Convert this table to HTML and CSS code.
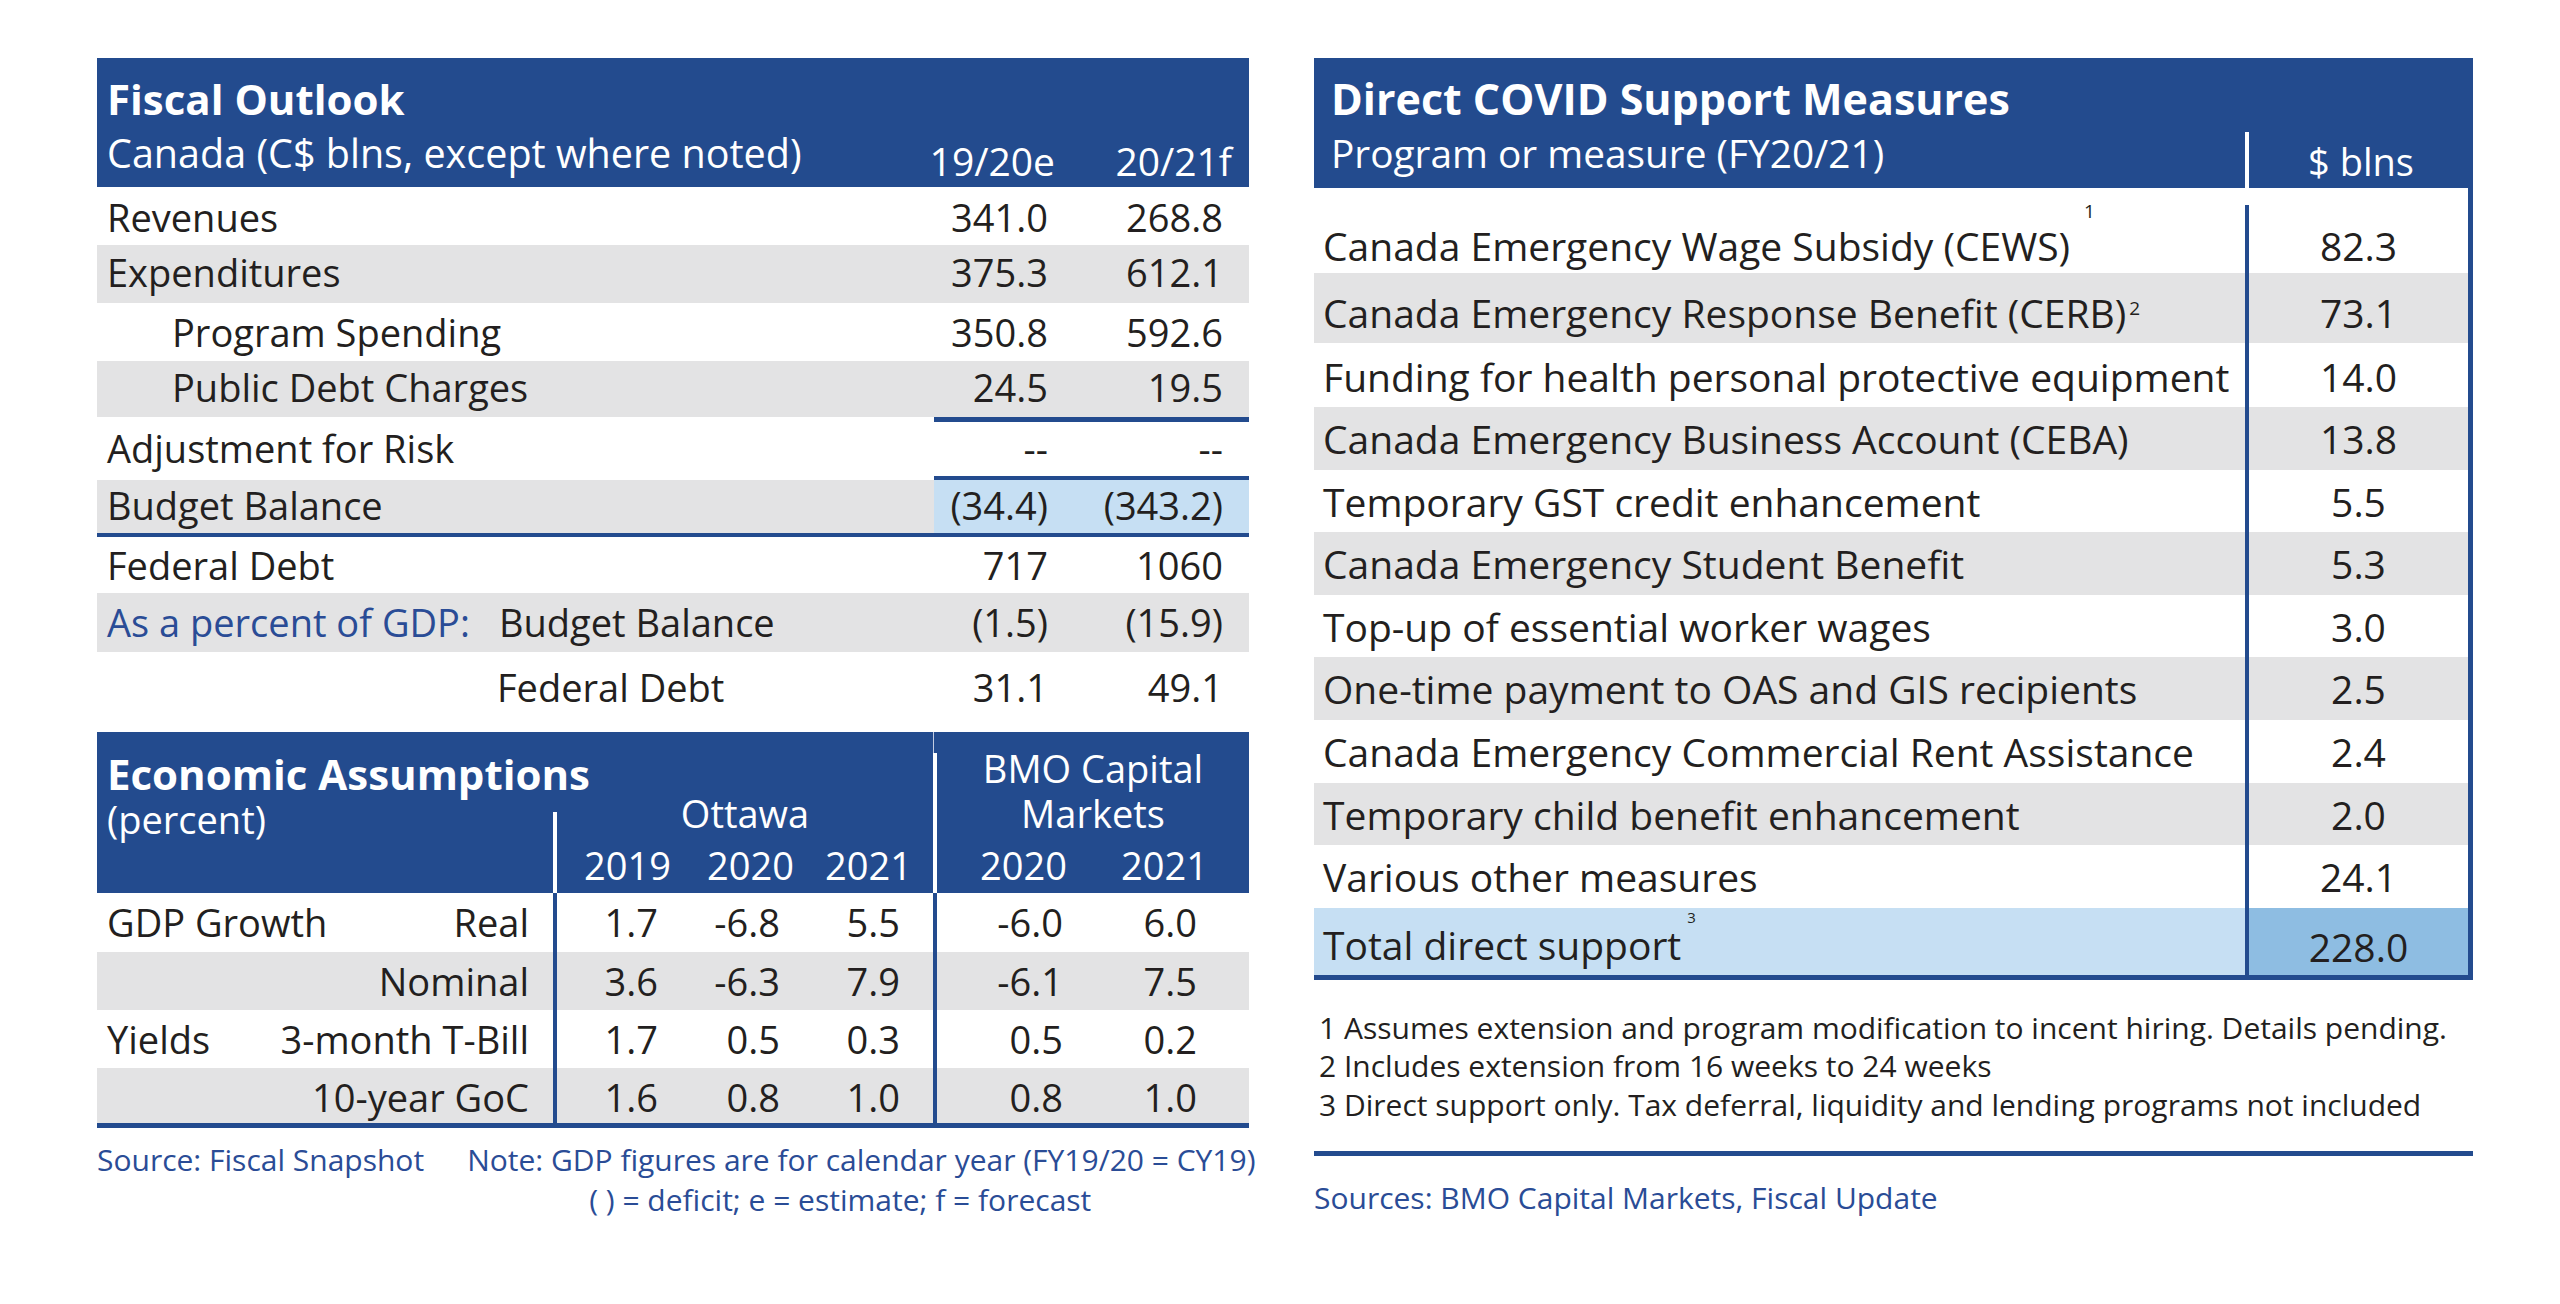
FILE: index.html
```html
<!DOCTYPE html>
<html lang="en">
<head>
<meta charset="utf-8">
<title>Fiscal Outlook and Direct COVID Support Measures</title>
<link rel="stylesheet" href="styles.css">
</head>
<body>
<div class="page">
  <section class="panel left">
    <div class="fo-head">
      <div class="ttl">Fiscal Outlook</div>
      <div class="fo-sub">
        <span class="sub">Canada (C$ blns, except where noted)</span>
        <span class="ch cha">19/20e</span>
        <span class="ch chb">20/21f</span>
      </div>
    </div>
    <div class="fr h58 p5"><span class="lbl">Revenues</span><span class="na">341.0</span><span class="nb">268.8</span></div>
    <div class="fr h58 p2 gray"><span class="lbl">Expenditures</span><span class="na">375.3</span><span class="nb">612.1</span></div>
    <div class="fr h58 p4"><span class="lbl ind">Program Spending</span><span class="na">350.8</span><span class="nb">592.6</span></div>
    <div class="fr h56 p1 gray"><span class="lbl ind">Public Debt Charges</span><span class="na">24.5</span><span class="nb">19.5</span></div>
    <div class="rule-num r5"></div>
    <div class="fr h54 p1"><span class="lbl">Adjustment for Risk</span><span class="na">--</span><span class="nb">--</span></div>
    <div class="rule-num r4"></div>
    <div class="fr h53 p0 bb"><span class="lbl">Budget Balance</span><span class="na">(34.4)</span><span class="nb">(343.2)</span></div>
    <div class="rule-full"></div>
    <div class="fr h56 p3"><span class="lbl">Federal Debt</span><span class="na">717</span><span class="nb">1060</span></div>
    <div class="fr h59 p4 gray"><span class="lbl pctl"><span class="blue-t">As a percent of GDP:</span><span>Budget Balance</span></span><span class="na">(1.5)</span><span class="nb">(15.9)</span></div>
    <div class="fr h58 p10 last"><span class="lbl fd2">Federal Debt</span><span class="na">31.1</span><span class="nb">49.1</span></div>

    <div class="ea-head">
      <div class="ea-l">
        <div class="ttl">Economic Assumptions</div>
        <div class="pct">(percent)</div>
      </div>
      <div class="vsep1"></div>
      <div class="ea-o">
        <div class="grp">Ottawa</div>
        <div class="yrs yrs-o"><span>2019</span><span>2020</span><span>2021</span></div>
      </div>
      <div class="vsep2"></div>
      <div class="ea-b">
        <div class="grp">BMO Capital<br>Markets</div>
        <div class="yrs yrs-b"><span>2020</span><span>2021</span></div>
      </div>
    </div>
    <div class="er h59">
      <span class="lab"><span>GDP Growth</span><span>Real</span></span><span class="sep"></span>
      <span class="v1">1.7</span><span class="v2">-6.8</span><span class="v3">5.5</span><span class="sep"></span>
      <span class="v4">-6.0</span><span class="v5">6.0</span>
    </div>
    <div class="er h58 gray">
      <span class="lab end"><span>Nominal</span></span><span class="sep"></span>
      <span class="v1">3.6</span><span class="v2">-6.3</span><span class="v3">7.9</span><span class="sep"></span>
      <span class="v4">-6.1</span><span class="v5">7.5</span>
    </div>
    <div class="er h58">
      <span class="lab"><span>Yields</span><span>3-month T-Bill</span></span><span class="sep"></span>
      <span class="v1">1.7</span><span class="v2">0.5</span><span class="v3">0.3</span><span class="sep"></span>
      <span class="v4">0.5</span><span class="v5">0.2</span>
    </div>
    <div class="er h55 gray">
      <span class="lab end"><span>10-year GoC</span></span><span class="sep"></span>
      <span class="v1">1.6</span><span class="v2">0.8</span><span class="v3">1.0</span><span class="sep"></span>
      <span class="v4">0.8</span><span class="v5">1.0</span>
    </div>
    <div class="ea-rule"></div>
    <div class="foot">
      <div class="src-l">Source: Fiscal Snapshot</div>
      <div class="note">
        <div>Note: GDP figures are for calendar year (FY19/20 = CY19)</div>
        <div class="note2">( ) = deficit; e = estimate; f = forecast</div>
      </div>
    </div>
  </section>

  <section class="panel right">
    <div class="cv-head">
      <div class="ttl">Direct COVID Support Measures</div>
      <div class="cv-sub">
        <span class="sub">Program or measure (FY20/21)</span>
        <span class="vsep"></span>
        <span class="ch">$ blns</span>
      </div>
    </div>
    <div class="cv-body">
      <div class="cv-sp"></div>
      <div class="cr r1"><span class="lbl">Canada Emergency Wage Subsidy (CEWS)<sup class="s1">1</sup></span><span class="sep"></span><span class="val">82.3</span></div>
      <div class="cr r2 gray"><span class="lbl">Canada Emergency Response Benefit (CERB)<sup class="s2">2</sup></span><span class="sep"></span><span class="val">73.1</span></div>
      <div class="cr r3"><span class="lbl">Funding for health personal protective equipment</span><span class="sep"></span><span class="val">14.0</span></div>
      <div class="cr gray"><span class="lbl">Canada Emergency Business Account (CEBA)</span><span class="sep"></span><span class="val">13.8</span></div>
      <div class="cr"><span class="lbl">Temporary GST credit enhancement</span><span class="sep"></span><span class="val">5.5</span></div>
      <div class="cr gray"><span class="lbl">Canada Emergency Student Benefit</span><span class="sep"></span><span class="val">5.3</span></div>
      <div class="cr"><span class="lbl">Top-up of essential worker wages</span><span class="sep"></span><span class="val">3.0</span></div>
      <div class="cr gray"><span class="lbl">One-time payment to OAS and GIS recipients</span><span class="sep"></span><span class="val">2.5</span></div>
      <div class="cr"><span class="lbl">Canada Emergency Commercial Rent Assistance</span><span class="sep"></span><span class="val">2.4</span></div>
      <div class="cr gray"><span class="lbl">Temporary child benefit enhancement</span><span class="sep"></span><span class="val">2.0</span></div>
      <div class="cr"><span class="lbl">Various other measures</span><span class="sep"></span><span class="val">24.1</span></div>
      <div class="cr tot"><span class="lbl">Total direct support<sup class="s3">3</sup></span><span class="sep"></span><span class="val">228.0</span></div>
    </div>
    <div class="notes">
      <div>1 Assumes extension and program modification to incent hiring. Details pending.</div>
      <div>2 Includes extension from 16 weeks to 24 weeks</div>
      <div>3 Direct support only. Tax deferral, liquidity and lending programs not included</div>
    </div>
    <div class="rule5"></div>
    <div class="src">Sources: BMO Capital Markets, Fiscal Update</div>
  </section>
</div>
</body>
</html>
```

FILE: styles.css
```css
:root {
  --blue: #234b8e;
  --gray: #e3e3e4;
  --lb: #c6dff3;
  --db: #8ebde2;
  --tblue: #2a4c96;
  --ink: #231f20;
}
* { box-sizing: border-box; margin: 0; padding: 0; }
body {
  margin: 0;
  background: #fff;
  font-family: "Open Sans", "Noto Sans", "DejaVu Sans", sans-serif;
  color: var(--ink);
}
.page {
  display: flex;
  align-items: flex-start;
  gap: 65px;
  padding: 58px 0 0 97px;
}
.left { width: 1152px; }
.right { width: 1159px; }

.ttl {
  font-weight: 700;
  font-size: 42px;
  line-height: 50px;
  white-space: nowrap;
}

/* ---------- Fiscal Outlook ---------- */
.fo-head {
  background: var(--blue);
  color: #fff;
  height: 129px;
}
.fo-head .ttl { padding: 16px 0 0 10px; }
.fo-sub {
  display: grid;
  grid-template-columns: 813px 150px 189px;
  height: 63px;
  font-size: 38px;
  line-height: 50px;
  white-space: nowrap;
}
.fo-sub .sub { padding: 4px 0 0 10px; font-size: 39.5px; }
.fo-sub .ch { padding-top: 12px; text-align: right; font-size: 39px; }
.fo-sub .cha { padding-right: 5px; }
.fo-sub .chb { padding-right: 17px; }

.fr {
  display: grid;
  grid-template-columns: 837px 126px 189px;
  font-size: 38px;
}
.fr > span { line-height: 50px; white-space: nowrap; padding-top: 3px; }
.fr.p0 > span { padding-top: 0; }
.fr.p1 > span { padding-top: 1px; }
.fr.p2 > span { padding-top: 2px; }
.fr.p4 > span { padding-top: 4px; }
.fr.p5 > span { padding-top: 5px; }
.fr.p10 > span { padding-top: 10px; }
.fr .lbl { padding-left: 10px; }
.fr .lbl.ind { padding-left: 75px; }
.fr .lbl.fd2 { padding-left: 400px; }
.fr .na { text-align: right; padding-right: 12px; }
.fr .nb { text-align: right; padding-right: 26px; }
.fr.gray { background: var(--gray); }
.fr.bb .lbl { background: var(--gray); }
.fr.bb .na, .fr.bb .nb { background: var(--lb); }
.fr.last { margin-bottom: 22px; }
.pctl { display: flex; }
.blue-t { color: var(--tblue); width: 392px; flex: none; }

.h53 { height: 53px; }
.h54 { height: 54px; }
.h55 { height: 55px; }
.h56 { height: 56px; }
.h58 { height: 58px; }
.h59 { height: 59px; }

.rule-num { margin-left: 837px; background: var(--blue); }
.rule-num.r5 { height: 5px; }
.rule-num.r4 { height: 4px; }
.rule-full { height: 4px; background: var(--blue); }

/* ---------- Economic Assumptions ---------- */
.ea-head {
  display: flex;
  height: 161px;
  background: var(--blue);
  color: #fff;
  font-size: 38px;
  white-space: nowrap;
}
.ea-l { width: 456px; }
.ea-l .ttl { padding: 17px 0 0 10px; }
.ea-l .pct { padding-left: 10px; line-height: 40px; }
.vsep1 {
  width: 4px;
  display: flex;
  flex-direction: column;
  justify-content: flex-end;
}
.vsep1::after { content: ""; height: 81px; background: #fff; }
.vsep2 {
  width: 4px;
  display: flex;
  flex-direction: column;
}
.vsep2::before { content: ""; width: 1px; height: 21px; background: #c3cde2; }
.vsep2::after { content: ""; flex: 1; background: #fff; }
.ea-o, .ea-b {
  display: flex;
  flex-direction: column;
  justify-content: flex-end;
}
.ea-o { width: 376px; }
.ea-b { width: 312px; }
.grp { text-align: center; line-height: 45px; margin-bottom: 9px; }
.yrs { display: grid; line-height: 40px; padding-bottom: 8px; }
.yrs span { text-align: right; }
.yrs-o { grid-template-columns: 127px 122px 127px; }
.yrs-o span:nth-child(1) { padding-right: 13px; }
.yrs-o span:nth-child(2) { padding-right: 12px; }
.yrs-o span:nth-child(3) { padding-right: 21px; }
.yrs-b { grid-template-columns: 153px 159px; }
.yrs-b span:nth-child(1) { padding-right: 23px; }
.yrs-b span:nth-child(2) { padding-right: 41px; }

.er {
  display: grid;
  grid-template-columns: 456px 4px 127px 122px 127px 4px 153px 159px;
  font-size: 38px;
  white-space: nowrap;
}
.er > span { line-height: 50px; padding-top: 4px; text-align: right; }
.er.gray { background: var(--gray); }
.er .sep { background: var(--blue); padding: 0; }
.er .lab {
  display: flex;
  justify-content: space-between;
  padding-left: 10px;
  padding-right: 24px;
}
.er .lab.end { justify-content: flex-end; }
.er .v1 { padding-right: 26px; }
.er .v2 { padding-right: 26px; }
.er .v3 { padding-right: 33px; }
.er .v4 { padding-right: 27px; }
.er .v5 { padding-right: 52px; }
.ea-rule { height: 5px; background: var(--blue); }

.foot {
  display: flex;
  gap: 43px;
  margin-top: 12px;
  font-size: 30px;
  line-height: 40px;
  color: var(--tblue);
  white-space: nowrap;
}
.note2 { padding-left: 122px; }

/* ---------- Direct COVID Support ---------- */
.cv-head {
  background: var(--blue);
  color: #fff;
  height: 130px;
}
.cv-head .ttl { padding: 16px 0 0 17px; font-size: 43px; }
.cv-sub {
  display: grid;
  grid-template-columns: 931px 4px 224px;
  height: 64px;
  font-size: 38px;
  line-height: 50px;
  white-space: nowrap;
}
.cv-sub .sub { padding: 4px 0 0 17px; font-size: 38.8px; }
.cv-sub .vsep { background: #fff; height: 56px; align-self: end; }
.cv-sub .ch { text-align: center; padding-top: 12px; }

.cv-body {
  border-right: 5px solid var(--blue);
  border-bottom: 5px solid var(--blue);
}
.cv-sp { height: 17px; }
.cr {
  display: grid;
  grid-template-columns: 931px 4px 219px;
  height: 62.6px;
  font-size: 39px;
  white-space: nowrap;
}
.cr > span { line-height: 50px; padding-top: 7px; }
.cr .lbl { padding-left: 9px; }
.cr .sep { background: var(--blue); padding: 0; }
.cr .val { text-align: center; }
.cr.gray { background: var(--gray); }
.cr.r1 { height: 68px; }
.cr.r1 > span { padding-top: 16px; }
.cr.r2 { height: 70px; }
.cr.r2 > span { padding-top: 15px; }
.cr.r3 { height: 64px; }
.cr.r3 > span { padding-top: 9px; }
.cr.tot { height: 67.2px; background: var(--lb); }
.cr.tot .lbl { padding-top: 12px; }
.cr.tot .val { padding-top: 14px; background: var(--db); }
.cr .sep { padding-top: 0; }

sup {
  line-height: 0;
  vertical-align: baseline;
  position: relative;
}
.s1 { font-size: 19px; top: -43px; margin-left: 14px; }
.s2 { font-size: 19px; top: -13px; margin-left: 3px; }
.s3 { font-size: 15px; top: -37px; margin-left: 6px; }

.notes {
  font-size: 30px;
  line-height: 38.5px;
  padding: 29px 0 0 5px;
  white-space: nowrap;
}
.rule5 { height: 5px; background: var(--blue); margin-top: 27px; }
.src {
  font-size: 30px;
  line-height: 40px;
  margin-top: 22px;
  color: var(--tblue);
  white-space: nowrap;
}
```
